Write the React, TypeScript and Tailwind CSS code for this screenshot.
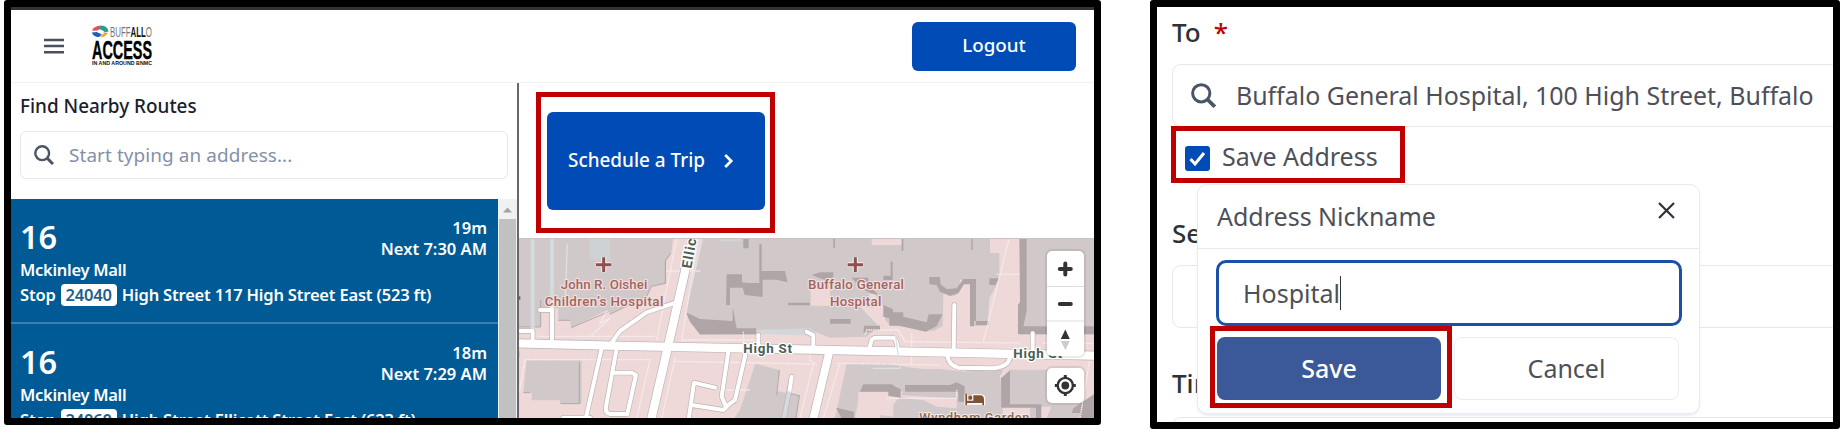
import React from "react";

const C = "rounded-[6px] bg-[#004bb5] text-white";

function Logo() {
  return (
    <svg width="62" height="42" viewBox="0 0 62 42" className="ml-[27px] block overflow-visible">
      <path d="M1 5.500C3 1 8 0 12 1.200L9 6Z" fill="#e8505b" />
      <path d="M9 1C14 0 17 3 17.500 6.500L13 7.500L9 5Z" fill="#2a9d8f" />
      <path d="M1 7.500L6 7L11 9.500L8 12C4 12 1.500 10 1 7.500Z" fill="#1d5fb4" />
      <path d="M9 12.300L13 8L17 7.500C15.500 10.500 13 12.500 9 12.300Z" fill="#f4a623" />
      <path d="M4.500 6.200L9 4.200L13.500 6.500L9 8.300Z" fill="#fff" />
      <g fontFamily="'Liberation Sans Narrow','Liberation Sans',sans-serif">
        <text x="19" y="11.800" fontSize="14" textLength="42" lengthAdjust="spacingAndGlyphs" fill="#777">
          BUFF<tspan fontWeight="700" fill="#111">ALL</tspan>O
        </text>
        <text x="1" y="34" fontSize="26.500" fontWeight="700" textLength="60" lengthAdjust="spacingAndGlyphs" fill="#000" stroke="#000" strokeWidth=".4">ACCESS</text>
        <text x="1" y="39.700" fontSize="5.400" fontWeight="700" textLength="60" lengthAdjust="spacingAndGlyphs" fill="#111">IN AND AROUND BNMC</text>
      </g>
    </svg>
  );
}

function SearchIcon({ className }: { className: string }) {
  return (
    <svg viewBox="0 0 20 20" className={className} fill="none" stroke="#4a5568" strokeWidth="2.400">
      <circle cx="8.200" cy="8.200" r="6.900" />
      <path d="M13 13L19 19" strokeWidth="3" />
    </svg>
  );
}

function RouteRow({ min, next, stop, place }: { min: string; next: string; stop: string; place: string }) {
  return (
    <div className="h-[125px] shrink-0 border-b-[2px] border-[#3a7fb0] pl-[9px] pr-[11px] pt-[18px] font-semibold">
      <div className="flex h-[42px] justify-between">
        <div className="text-[32.5px] leading-[40px]">16</div>
        <div className="pt-[1px] text-right text-[16.5px] leading-[20.500px]">
          <div>{min}</div>
          <div>{next}</div>
        </div>
      </div>
      <div className="text-[16.5px] leading-[22px] tracking-[-0.3px]">Mckinley Mall</div>
      <div className="flex h-[28px] items-center whitespace-nowrap text-[16.5px] leading-[22px] tracking-[-0.19px]">
        <span>Stop</span>
        <span className="ml-[5px] mr-[5px] rounded-[4px] bg-white px-[5px] text-[#1f5f8f]">{stop}</span>
        <span>{place}</span>
      </div>
    </div>
  );
}

function CityMap() {
  return (
    <svg viewBox="519 238 575 180" width="575" height="180" className="block">
      <rect x="519" y="238" width="575" height="180" fill="#eed8d8" />
      <g transform="translate(510 225) scale(.33333)">
        <g fill="#d1c8c9">
          <path d="M0 30H490L484 84L468 108V175L424 184L410 214L300 268L292 255L184 308L180 286H145V250H92V306H27Z" />
          <path d="M582 30H1085V60H1175V40H1440V84H1468V165L1438 220L1432 303H1380V165H1350V190L1335 212L1300 205L1298 303L1270 318L1140 300L1125 285V250L1060 160L1110 302L1070 335L960 338L895 312L745 315L740 328L570 330L540 290L528 262Z" />
          <path d="M50 406H215V536H150V526H65V503H40Z" />
          <path d="M736 416L810 436L800 498L870 512L858 580H672L690 555Z" />
          <path d="M1010 416H1140L1220 432H1290L1470 452L1480 435L1370 430L1360 470L1330 500L1050 492L1030 580H975Z" />
          <path d="M1050 416L1470 450L1480 580H1120L1180 510L1050 500L1035 580H975Z" />
          <path d="M1125 515L1340 525V580H1110Z" />
          <path d="M1530 30H1752V328H1530Z" />
          <path d="M1500 434H1650V545H1590V580H1560V545H1475V470Z" />
          <path d="M1630 530H1752V580H1610Z" />
        </g>
        <path d="M902 190H960V242H902ZM1050 245L1122 250L1125 300L1105 302ZM1085 30H1175V45ZM1045 500L1180 500L1150 540V575L1045 560ZM1155 510L1340 520V550L1280 545L1240 525L1200 522Z" fill="#eed8d8" />
        <g fill="#afa5a6">
          <path d="M528 262L570 282L668 288V246L680 310H738V328H570L540 290Z" />
          <path d="M650 148H696V172L716 174H748V58H755V138H825L833 172L800 164H758V216L704 210L698 188H660V240H648Z" />
          <path d="M700 40H716V70H700ZM834 233H900V241H834Z" />
          <path d="M905 150L930 142H970V156L945 165ZM1025 158H1075V178L1105 210L1080 205L1050 185ZM1120 152H1142V110H1148V165H1120ZM960 282H1022V296H960ZM1062 302H1110V314L1060 324Z" />
          <path d="M1120 240L1148 252L1150 262H1180V275L1250 292L1256 268H1298L1280 303L1248 320L1168 302H1138V280L1120 275Z" />
          <path d="M1258 156H1290L1292 178L1310 192L1340 190L1360 162H1398V300H1436V288H1392V304H1380V178H1362L1345 205L1320 213L1290 200L1280 180L1258 178ZM1438 160H1466L1456 180H1438Z" />
          <path d="M1528 35H1550V258L1540 304H1752V328H1524V240L1530 230Z" />
          <path d="M970 38H975V68H970ZM1175 38H1180V78H1175ZM1384 38H1388V75H1384Z" />
          <path d="M1060 478H1145L1158 486L1172 492V518L1135 512V500H1050ZM1185 480H1320L1340 472L1364 484V530H1345V500H1185ZM978 548L1032 560V580H995Z" />
          <path d="M1473 460L1500 436V538H1594V580H1578V548H1474ZM1690 550L1752 508V580H1710V564H1685Z" />
        </g>
        <g stroke="#9d9495" fill="none" strokeWidth="2">
          <path d="M27 306H92V225M145 286H180M184 308L292 262M300 268L410 214L424 184L466 175V108L482 84M208 412V536H152M40 503H60M808 436L800 510M840 505L868 512L858 580" />
        </g>
        <g fill="#ced6da">
          <path d="M238 38H300V104H238Z" opacity=".7" />
          <path d="M630 38H693V48H630ZM745 314L905 310V332L740 326ZM870 315L910 320V345L890 332Z" opacity=".85" />
        </g>
        <g fill="none" stroke="#f9eeee" strokeWidth="4" strokeDasharray="5 2">
          <path d="M500 38L440 345M565 38L515 345H745M85 334H435M45 404H420L380 580M45 404L28 500M495 400L455 580M495 409L910 417L870 580M920 420L900 405V370M1065 330L1070 315H1165L1185 350L1530 354M990 415L940 580M980 415L1290 420M1498 38L1420 350M1460 148H1530M1600 355H1750M468 138H570M240 335L300 280L270 295L290 260M640 495H720M700 320V355" />
          <path d="M1205 325V420M1130 520H1340V495M1530 400H1740L1710 580" />
        </g>
        <g fill="none" strokeLinecap="round" strokeLinejoin="round">
          <g stroke="#bdb4b4">
            <path d="M22 355L300 362L905 374L1755 392" strokeWidth="29" />
            <path d="M535 95L475 360L422 590" strokeWidth="29" />
            <path d="M0 318H68V345M126 250V350M90 255H126M300 360L330 318L410 262L490 235M275 370L225 590M320 370L288 545Q285 565 300 567H352L378 450L365 443H312M655 380L635 515L648 545L675 525L706 390M615 488L552 473L535 590M545 540L640 555L650 545M845 455L820 590M745 330V370M910 370V330L890 320M1078 370L1085 345Q1090 338 1100 338H1150Q1158 338 1163 370M1333 240L1331 380M1568 325V380M1312 390Q1315 420 1345 428L1450 430Q1495 425 1500 398M160 578H240M22 385L10 440" strokeWidth="16" />
            <path d="M958 380L908 590" strokeWidth="28" />
          </g>
          <g stroke="#fff">
            <path d="M126 20V250M68 20V310" stroke="#d5dadc" strokeWidth="12" />
            <path d="M22 355L300 362L905 374L1755 392" strokeWidth="25" />
            <path d="M535 95L475 360L422 590" strokeWidth="25" />
            <path d="M0 318H68V345M126 250V350M90 255H126M300 360L330 318L410 262L490 235M275 370L225 590M320 370L288 545Q285 565 300 567H352L378 450L365 443H312M655 380L635 515L648 545L675 525L706 390M615 488L552 473L535 590M545 540L640 555L650 545M845 455L838 500M745 330V370M910 370V330L890 320M1078 370L1085 345Q1090 338 1100 338H1150Q1158 338 1163 370M1333 240L1331 380M1568 325V380M1312 390Q1315 420 1345 428L1450 430Q1495 425 1500 398M160 578H240M22 385L10 440" strokeWidth="12" />
            <path d="M958 380L908 590" strokeWidth="24" />
            <path d="M836 505L820 590" stroke="#d5dadc" strokeWidth="12" />
            <path d="M172 60L166 210M575 50L540 200M1090 430H1170M1155 320L1170 430" stroke="#dce0e2" strokeWidth="4" />
          </g>
        </g>
        <g stroke="#f4e6e6" strokeWidth="16" fill="none"><path d="M281 96V142M257 119H305M1036 96V142M1012 119H1060" /></g>
        <g stroke="#8c504d" strokeWidth="9" fill="none"><path d="M281 97V141M258 119H304M1036 97V141M1013 119H1059" /></g>
        <g fontFamily="Roboto, sans-serif" fontSize="40" fontWeight="500" fill="#a4635f" stroke="#eee0e0" strokeWidth="7" strokeLinejoin="round" style={{ paintOrder: "stroke" }}>
          <text x="152" y="191" textLength="260">John R. Oishei</text>
          <text x="104" y="244" textLength="356">Children’s Hospital</text>
          <text x="894" y="191" textLength="288">Buffalo General</text>
          <text x="960" y="244" textLength="154">Hospital</text>
        </g>
        <path d="M24 214H31V224H24Z" fill="#8c504d" />
        <g fontFamily="Roboto, sans-serif" fontSize="40" fontWeight="700" fill="#4b5d56" stroke="#fff" strokeWidth="8" strokeLinejoin="round" style={{ paintOrder: "stroke" }}>
          <text x="700" y="383" textLength="146">High St</text>
          <text x="1510" y="398" textLength="146">High St</text>
          <text transform="translate(544 132) rotate(-80)" fontSize="42" letterSpacing="3">Ellicott St</text>
        </g>
        <path d="M1368 508V541M1368 535H1421V541M1368 530H1421V518Q1420 512 1411 512H1391V527" fill="none" stroke="#fff" strokeWidth="9" />
        <path d="M1366 506H1371V527H1390V511H1411Q1421 512 1422 521V541H1417V534H1371V541H1366Z" fill="#81522f" />
        <circle cx="1381" cy="518" r="6" fill="#81522f" />
        <text x="1228" y="591" textLength="330" fontFamily="Roboto, sans-serif" fontSize="38" fontWeight="500" fill="#8b6c4d" stroke="#f2eaea" strokeWidth="6" style={{ paintOrder: "stroke" }}>Wyndham Garden</text>
      </g>
      <path d="M519 238.500H1094" stroke="#c9c2c3" strokeWidth="1" />
    </svg>
  );
}

function MapControls() {
  return (
    <>
      <div className="absolute left-[528px] top-[13px] flex h-[105px] w-[37px] flex-col rounded-[5px] bg-white shadow-[0_0_0_2px_rgba(0,0,0,0.08)]">
        <svg viewBox="0 0 37 105" className="block h-[105px] w-[37px]">
          <path d="M0 35.500H37M0 70H37" stroke="#ddd" />
          <path d="M18.300 12.500V23.500M12.800 18H23.800M12.800 53H23.800" stroke="#333" strokeWidth="4" strokeLinecap="round" />
          <path d="M13.800 88L18.300 78.500L22.800 88Z" fill="#333" />
          <path d="M13.800 90L18.300 99L22.800 90Z" fill="#ccc" />
        </svg>
      </div>
      <div className="absolute left-[528px] top-[130px] h-[35px] w-[37px] rounded-[5px] bg-white shadow-[0_0_0_2px_rgba(0,0,0,0.08)]">
        <svg viewBox="0 0 37 35" className="block h-[35px] w-[37px]" fill="none" stroke="#333">
          <circle cx="18.300" cy="17.500" r="7.600" strokeWidth="2.400" />
          <circle cx="18.300" cy="17.500" r="3.900" fill="#333" stroke="none" />
          <path d="M18.300 7V10M18.300 25V28M7.800 17.500H10.800M25.800 17.500H28.800" strokeWidth="3" />
        </svg>
      </div>
    </>
  );
}

function LeftPanel() {
  return (
    <section className="ml-[4px] flex h-[425px] w-[1097px] shrink-0 flex-col overflow-hidden rounded-[3px] border-[7px] border-black bg-white">
      <div className="h-[3px] shrink-0 bg-[#333]" />
      <header className="flex h-[73px] shrink-0 items-center border-b border-[#edf2f7] pl-[33px] pr-[18px]">
        <svg width="20" height="16" viewBox="0 0 20 16" stroke="#4a4f5e" strokeWidth="2.500">
          <path d="M0 2H20M0 8H20M0 14.200H20" />
        </svg>
        <Logo />
        <button className={`${C} ml-auto h-[49px] w-[164px] pb-[2px] text-[18.8px] font-medium`}>Logout</button>
      </header>
      <div className="flex min-h-0 flex-1">
        <div className="flex w-[506px] shrink-0 flex-col">
          <h2 className="pl-[9px] pt-[9px] text-[18.9px] font-medium leading-[28px] text-[#1a202c]">Find Nearby Routes</h2>
          <div className="ml-[9px] mt-[11px] flex h-[48px] w-[488px] shrink-0 items-center rounded-[6px] border border-[#e2e8f0] pl-[13px]">
            <SearchIcon className="h-[20px] w-[20px]" />
            <span className="ml-[15px] mt-px text-[18.9px] tracking-[0.1px] text-[#8490a8]">Start typing an address...</span>
          </div>
          <div className="mt-[20px] flex min-h-0 flex-1">
            <div className="flex w-[487px] flex-col overflow-hidden bg-[#005a96] text-white">
              <RouteRow min="19m" next="Next 7:30 AM" stop="24040" place="High Street 117 High Street East (523 ft)" />
              <RouteRow min="18m" next="Next 7:29 AM" stop="24060" place="High Street Ellicott Street East (623 ft)" />
            </div>
            <div className="flex w-[19px] flex-col items-center bg-[#f1f1f1]">
              <svg width="19" height="20" viewBox="0 0 19 20" className="shrink-0"><path d="M5 13.500L9.500 8.500L14 13.500Z" fill="#a3a3a3" /></svg>
              <div className="w-[17px] flex-1 bg-[#c1c1c1]" />
            </div>
          </div>
        </div>
        <div className="w-[2px] bg-[#66666b]" />
        <div className="flex flex-1 flex-col">
          <div className="h-[155px] shrink-0 pl-[17px] pt-[9px]">
            <div className="flex h-[141px] w-[239px] border-[5px] border-[#c00000] pl-[6px] pt-[15px]">
              <button className={`${C} flex h-[98px] w-[218px] items-center pb-[2px] pl-[21px] text-[18.9px] font-medium`}>
                Schedule a Trip
                <svg width="10" height="16" viewBox="0 0 10 16" className="ml-[19px] mt-px" fill="none" stroke="#fff" strokeWidth="2.700"><path d="M1.200 2L7.200 8L1.200 14" /></svg>
              </button>
            </div>
          </div>
          <div className="relative h-[180px] overflow-hidden">
            <CityMap />
            <MapControls />
          </div>
        </div>
      </div>
    </section>
  );
}

function Popover() {
  return (
    <div className="absolute left-[40px] top-[177px] flex h-[230px] w-[503px] flex-col rounded-[10px] border-[1.500px] border-[#e8eaf2] bg-white shadow-[0_2px_2px_rgba(220,224,240,0.5)]">
      <div className="flex h-[64px] shrink-0 items-start justify-between border-b-[1.500px] border-[#e8eaf2] pl-[19px] pr-[24px]">
        <span className="mt-[13px] text-[25px] leading-[36px] text-[#4d5058]">Address Nickname</span>
        <svg width="17" height="17" viewBox="0 0 17 17" className="mt-[17px]" stroke="#2f3238" strokeWidth="2.200"><path d="M1 1L16 16M16 1L1 16" /></svg>
      </div>
      <div className="ml-[18px] mt-[11px] flex h-[66px] w-[466px] items-center rounded-[10px] border-[3px] border-[#1b50a8] pl-[24px]">
        <span className="mt-[2px] text-[25px] text-[#4d5058]">Hospital</span>
        <span className="h-[34px] w-[1.500px] bg-[#333]" />
      </div>
      <div className="flex">
        <div className="ml-[12px] flex h-[82px] w-[242px] border-[5px] border-[#c00000] pl-[2px] pt-[6px]">
          <button className="h-[63px] w-[224px] shrink-0 rounded-[8px] bg-[#3b5998] text-[25px] font-medium text-white">Save</button>
        </div>
        <button className="ml-[2px] mt-[11px] h-[63px] w-[225px] rounded-[8px] border-[1.500px] border-[#ececf0] text-[25px] text-[#4d5058]">Cancel</button>
      </div>
    </div>
  );
}

function RightPanel() {
  return (
    <section className="relative ml-[49px] h-[429px] w-[690px] shrink-0 overflow-hidden rounded-[3px] border-[7px] border-black bg-white">
      <div className="flex h-full flex-col pl-[15px]">
        <div className="flex h-[57px] shrink-0 pt-[8px] text-[26px] font-medium leading-[34px] text-[#2d3138]">
          To<span className="ml-[13px] text-[#c00000]">*</span>
        </div>
        <div className="flex h-[63px] w-[720px] shrink-0 items-center rounded-[9px] border-[1.500px] border-[#e6e8ee] pl-[18px]">
          <SearchIcon className="h-[25px] w-[25px]" />
          <span className="ml-[20px] whitespace-nowrap text-[24.95px] text-[#4d5058]">Buffalo General Hospital, 100 High Street, Buffalo</span>
        </div>
        <div className="-ml-px -mt-px flex h-[57px] w-[234px] shrink-0 items-center border-[5px] border-[#c00000] pl-[9px]">
          <svg width="25" height="25" viewBox="0 0 25 25" className="mt-[7px]"><rect width="25" height="25" rx="3" fill="#004bb5" /><path d="M5.500 13L10 18L19 7" fill="none" stroke="#fff" strokeWidth="3" /></svg>
          <span className="ml-[12px] mt-[3px] text-[25px] leading-[36px] text-[#4d5058]">Save Address</span>
        </div>
        <div className="mt-[33px] text-[26px] font-medium leading-[34px] text-[#2d3138]">Select</div>
        <div className="mt-[15px] h-[63px] w-[720px] shrink-0 rounded-[9px] border-[1.500px] border-[#e6e8ee]" />
        <div className="mt-[38px] text-[26px] font-medium leading-[34px] text-[#2d3138]">Time</div>
        <div className="mt-[17px] h-[63px] w-[720px] shrink-0 rounded-[9px] border-[1.500px] border-[#e6e8ee]" />
      </div>
      <Popover />
    </section>
  );
}

export default function App() {
  return (
    <main className="flex h-[435px] w-[1847px] overflow-hidden bg-white font-['Noto_Sans',sans-serif]">
      <LeftPanel />
      <RightPanel />
    </main>
  );
}
